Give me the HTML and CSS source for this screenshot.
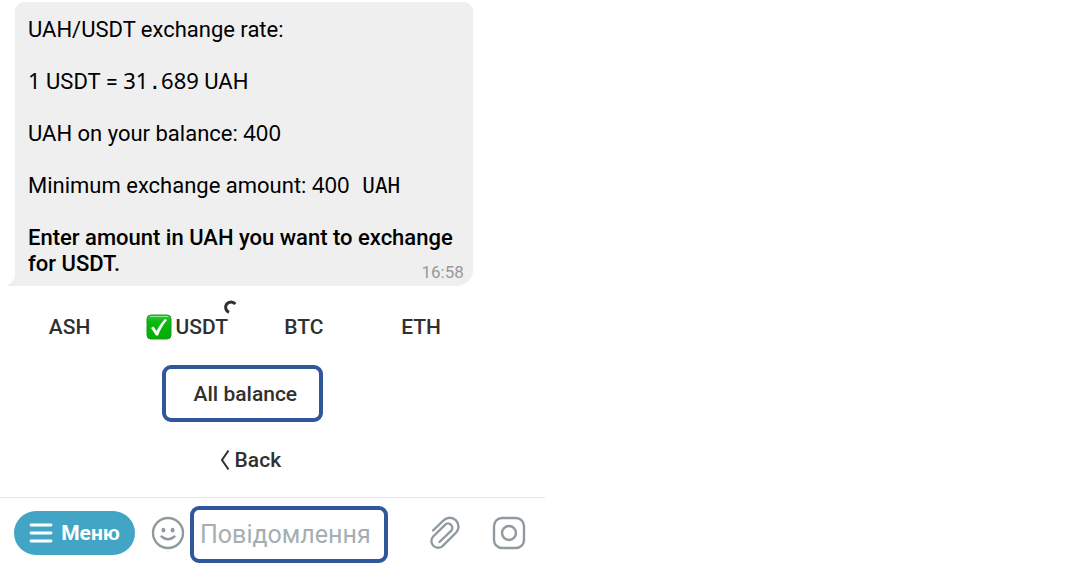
FILE: index.html
```html
<!DOCTYPE html>
<html lang="en">

<head>
    <meta charset="UTF-8">
    <meta name="viewport" content="width=device-width, initial-scale=1.0">
    <title>UAH/USDT exchange</title>
    <link rel="stylesheet" href="styles.css">
</head>

<body>
    <main class="chat">
        <!-- Bot message -->
        <section class="message">
            <svg class="message-tail" viewBox="0 0 8 20" aria-hidden="true">
                <path d="M8 0 C8 10 6 16 0 19 L0 20 H8 Z" fill="#efefef" />
            </svg>
            <p>UAH/USDT exchange rate:</p>
            <p><span class="num">1</span> USDT = <span class="num">31<span class="mono">.</span>689</span> UAH</p>
            <p>UAH on your balance: <span class="num">400</span></p>
            <p>Minimum exchange amount: <span class="num">400</span><span class="mono"> UAH</span></p>
            <p class="prompt">Enter amount in UAH you want to exchange for USDT. <time class="message-time">16:58</time></p>
        </section>

        <!-- Inline keyboard -->
        <div class="keyboard">
            <div class="coins">
                <button class="key" type="button">ASH</button>
                <button class="key key-active" type="button">
                    <svg class="check" viewBox="0 0 26 26" aria-hidden="true">
                        <defs>
                            <linearGradient id="green" x1="0" y1="0" x2="0" y2="1">
                                <stop offset="0" stop-color="#35cb3c" />
                                <stop offset="0.3" stop-color="#08b80d" />
                                <stop offset="1" stop-color="#04ad05" />
                            </linearGradient>
                        </defs>
                        <rect x="1" y="1" width="24" height="24" rx="4" fill="url(#green)" stroke="#189b1b" />
                        <path d="M4 2.5 H22" stroke="#8be68c" stroke-linecap="round" />
                        <path d="M5 14 L7.5 12.5 L10.5 17 C13 12 16 8 19 5 L21 6 C17 11 14 16 12 21.5 L10 21.5 Z" fill="#fff" />
                    </svg>
                    USDT
                    <svg class="spinner" viewBox="0 0 14 14" aria-hidden="true">
                        <path d="M12.3 4 A5.4 5.4 0 1 0 6 12.3" fill="none" stroke="#303030" stroke-width="3" />
                    </svg>
                </button>
                <button class="key" type="button">BTC</button>
                <button class="key" type="button">ETH</button>
            </div>
            <button class="key key-all" type="button">All balance</button>
            <button class="key key-back" type="button">
                <svg class="chevron" viewBox="0 0 10 22" aria-hidden="true">
                    <path d="M8.5 1.5 L2 11 L8.5 20.5" fill="none" stroke="#303030" stroke-width="2" />
                </svg>
                Back
            </button>
        </div>

        <!-- Input bar -->
        <footer class="composer">
            <button class="menu-btn" type="button">
                <svg class="burger" viewBox="0 0 24 20" aria-hidden="true">
                    <path d="M2 2 H22 M2 10 H22 M2 18 H22" stroke="#fff" stroke-width="2.8" stroke-linecap="round" />
                </svg>
                Меню
            </button>
            <button class="icon-btn emoji-btn" type="button" aria-label="Emoji">
                <svg viewBox="0 0 34 34">
                    <circle cx="17" cy="17" r="15" />
                    <ellipse class="eye" cx="12.4" cy="14.2" rx="1.9" ry="2.4" />
                    <ellipse class="eye" cx="21.6" cy="14.2" rx="1.9" ry="2.4" />
                    <path d="M10.500 20.500 Q17 26 23.500 20.500" />
                </svg>
            </button>
            <input class="message-input" type="text" placeholder="Повідомлення" aria-label="Повідомлення">
            <button class="icon-btn attach-btn" type="button" aria-label="Attach">
                <svg viewBox="0 0 34 34">
                    <path d="M5 14.5 L15.3 4.6 A8.7 8.7 0 0 1 28.2 16.5 L15 29.7 A6.6 6.6 0 0 1 5.2 20.5 L17 8.8 A4.2 4.2 0 0 1 23 14.8 L11.5 26" />
                </svg>
            </button>
            <button class="icon-btn" type="button" aria-label="Camera">
                <svg viewBox="0 0 34 34">
                    <rect x="2" y="2" width="30" height="30" rx="8" />
                    <circle cx="17" cy="17" r="7" />
                </svg>
            </button>
        </footer>
    </main>
</body>

</html>
```
FILE: styles.css
```css
* {
    box-sizing: border-box;
}

body {
    margin: 0;
    background-color: #fff;
    font-family: Roboto, "Liberation Sans", sans-serif;
    font-size: 22px;
    line-height: 26px;
    color: #000;
}

button,
input {
    font: inherit;
}

.chat {
    max-width: 545px;
}

.message {
    position: relative;
    width: 84%;
    margin: 2px 0 0 15px;
    padding: 15px 9px 9px 13px;
    background: #efefef;
    border-radius: 9px 9px 16px 0;
}

.message p {
    margin: 0 0 26px;
}

.message .prompt {
    margin: 0;
    font-weight: 500;
}

.message-tail {
    position: absolute;
    left: -7px;
    bottom: 0;
    width: 8px;
    height: 20px;
}

.message-time {
    float: right;
    margin-top: 11px;
    font-size: 17px;
    font-weight: 400;
    line-height: 20px;
    color: #98999b;
}

.num {
    font-family: "Noto Sans", sans-serif;
    line-height: 20px;
}

.mono {
    font-family: "DejaVu Sans Mono", monospace;
    font-size: 21px;
    line-height: 20px;
    white-space: pre;
}

/* Inline keyboard */
.keyboard {
    display: flex;
    flex-direction: column;
    align-items: center;
    width: 86%;
    margin-left: 11px;
    padding: 14px 0 10px;
}

.coins {
    display: grid;
    grid-template-columns: repeat(4, 1fr);
    width: 100%;
}

.key {
    position: relative;
    display: flex;
    align-items: center;
    justify-content: center;
    height: 54px;
    padding: 0;
    border: none;
    background: none;
    font-size: 21px;
    font-weight: 500;
    color: #303030;
    cursor: pointer;
}

.key-active {
    gap: 4px;
}

.check {
    width: 26px;
    height: 26px;
}

.spinner {
    position: absolute;
    top: 0;
    right: 8px;
    width: 14px;
    height: 14px;
}

.key-all {
    width: 161px;
    height: 57px;
    margin: 11px 6px 11px 0;
    padding-left: 6px;
    border: 4px solid #30569b;
    border-radius: 9px;
}

.key-back {
    gap: 5px;
    padding-left: 10px;
}

.chevron {
    width: 10px;
    height: 22px;
}

/* Input bar */
.composer {
    display: flex;
    align-items: center;
    padding: 8px 19px 0 14px;
    border-top: 1px solid #e6e6e6;
}

.menu-btn {
    display: flex;
    align-items: center;
    justify-content: center;
    gap: 8px;
    width: 121px;
    height: 44px;
    margin-bottom: 3px;
    padding: 0;
    border: none;
    border-radius: 22px;
    background: #43a5c6;
    font-size: 21px;
    font-weight: 700;
    color: #fff;
    cursor: pointer;
}

.burger {
    width: 24px;
    height: 20px;
}

.icon-btn {
    width: 34px;
    height: 34px;
    margin-bottom: 3px;
    padding: 0;
    border: none;
    background: none;
    cursor: pointer;
}

.icon-btn svg {
    display: block;
    fill: none;
    stroke: #909a9e;
    stroke-width: 2.4;
    stroke-linecap: round;
    stroke-linejoin: round;
}

.icon-btn .eye {
    fill: #909a9e;
    stroke: none;
}

.emoji-btn {
    margin-left: 16px;
    margin-right: 5px;
}

.message-input {
    flex: 1;
    min-width: 0;
    height: 57px;
    padding: 0 6px;
    border: 4px solid #30569b;
    border-radius: 9px;
    background: #fff;
    font-size: 25px;
}

.message-input::placeholder {
    color: #a5aeb2;
    opacity: 1;
}

.attach-btn {
    margin-left: 40px;
    margin-right: 30px;
}
```
